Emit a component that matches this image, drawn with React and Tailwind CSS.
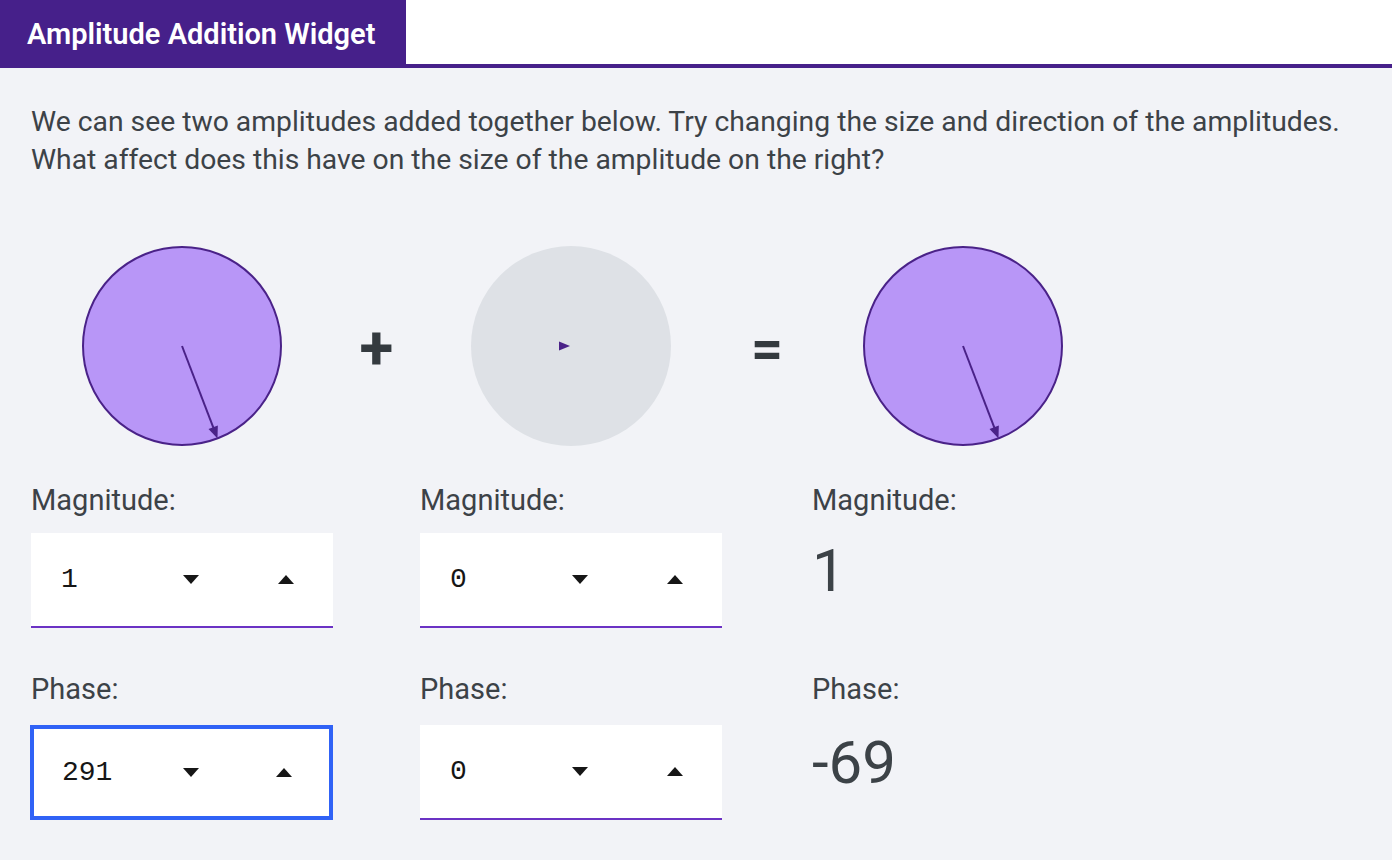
import React from "react";

const FONT = { fontFamily: "Roboto, 'Liberation Sans', sans-serif" };
const MONO = { fontFamily: "'Liberation Mono', 'DejaVu Sans Mono', monospace" };

function Dial({ active, angle }) {
  return (
    <svg width="204" height="204" viewBox="-102 -102 204 204" className="block">
      {active ? (
        <circle cx="0" cy="0" r="99" fill="#b896f7" stroke="#4a2288" strokeWidth="2" />
      ) : (
        <circle cx="0" cy="0" r="100" fill="#dee1e6" />
      )}
      {active ? (
        <g transform={`rotate(${angle})`}>
          <line x1="0" y1="0" x2="88" y2="0" stroke="#4a2288" strokeWidth="2" />
          <polygon points="87,-5 99,0 87,5" fill="#4a2288" />
        </g>
      ) : (
        <polygon points="-12,-4.5 -1,0 -12,4.5" fill="#4a2288" />
      )}
    </svg>
  );
}

function Tri({ up }) {
  return (
    <svg width="16" height="9" viewBox="0 0 16 9">
      {up ? <polygon points="0,9 8,0 16,9" fill="#161616" /> : <polygon points="0,0 16,0 8,9" fill="#161616" />}
    </svg>
  );
}

function NumInput({ value, focused }) {
  return (
    <div
      className={
        "h-[95px] bg-white flex items-center " +
        (focused ? "border-4 border-[#3062f6] -ml-[1px]" : "border-b-2 border-[#6b32c4]")
      }
    >
      <div
        className={"flex-1 text-[28px] text-[#161616] " + (focused ? "pl-[28px]" : "pl-[30px]")}
        style={MONO}
      >
        {value}
      </div>
      <div className="w-[96px] flex justify-center">
        <Tri />
      </div>
      <div className={"flex justify-center " + (focused ? "w-[90px]" : "w-[94px]")}>
        <Tri up />
      </div>
    </div>
  );
}

function Label({ children }) {
  return <div className="text-[29px] leading-[36px] text-[#3c4247] h-[36px]">{children}</div>;
}

export default function App() {
  return (
    <div className="min-h-[860px] bg-[#f2f3f7] text-[#3c4247]" style={FONT}>
      <div className="h-[68px] bg-white border-b-4 border-[#46208a] flex">
        <div className="w-[406px] h-[68px] bg-[#46208a] text-white font-semibold text-[29px] pl-[27px] flex items-center pt-[1px]">
          Amplitude Addition Widget
        </div>
      </div>
      <div className="pl-[31px] pr-[20px]">
        <p className="mt-[35px] text-[28.3px] leading-[38px] text-[#3c4247]">
          We can see two amplitudes added together below. Try changing the size and direction of the amplitudes.
          <br />
          What affect does this have on the size of the amplitude on the right?
        </p>
        <div className="mt-[65px] grid grid-cols-[302px_87px_302px_90px_302px]">
          <div className="flex justify-center">
            <Dial active angle={69} />
          </div>
          <div className="flex items-center justify-center text-[62px] font-bold text-[#343a3f] leading-none pt-[4px]">+</div>
          <div className="flex justify-center">
            <Dial />
          </div>
          <div className="flex items-center justify-center text-[56px] font-bold text-[#343a3f] leading-none pt-[6px]">=</div>
          <div className="flex justify-center">
            <Dial active angle={69} />
          </div>

          <div className="col-start-1 mt-[34px]"><Label>Magnitude:</Label></div>
          <div className="col-start-3 mt-[34px]"><Label>Magnitude:</Label></div>
          <div className="col-start-5 mt-[34px]"><Label>Magnitude:</Label></div>

          <div className="col-start-1 mt-[15px]"><NumInput value="1" /></div>
          <div className="col-start-3 mt-[15px]"><NumInput value="0" /></div>
          <div className="col-start-5 mt-[15px] h-[95px] flex items-center">
            <div className="text-[60px] leading-none text-[#3c4247] -mt-[20px]">1</div>
          </div>

          <div className="col-start-1 mt-[43px]"><Label>Phase:</Label></div>
          <div className="col-start-3 mt-[43px]"><Label>Phase:</Label></div>
          <div className="col-start-5 mt-[43px]"><Label>Phase:</Label></div>

          <div className="col-start-1 mt-[18px]"><NumInput value="291" focused /></div>
          <div className="col-start-3 mt-[18px]"><NumInput value="0" /></div>
          <div className="col-start-5 mt-[18px] h-[95px] flex items-center">
            <div className="text-[60px] leading-none text-[#3c4247] -mt-[20px]">-69</div>
          </div>
        </div>
      </div>
    </div>
  );
}
